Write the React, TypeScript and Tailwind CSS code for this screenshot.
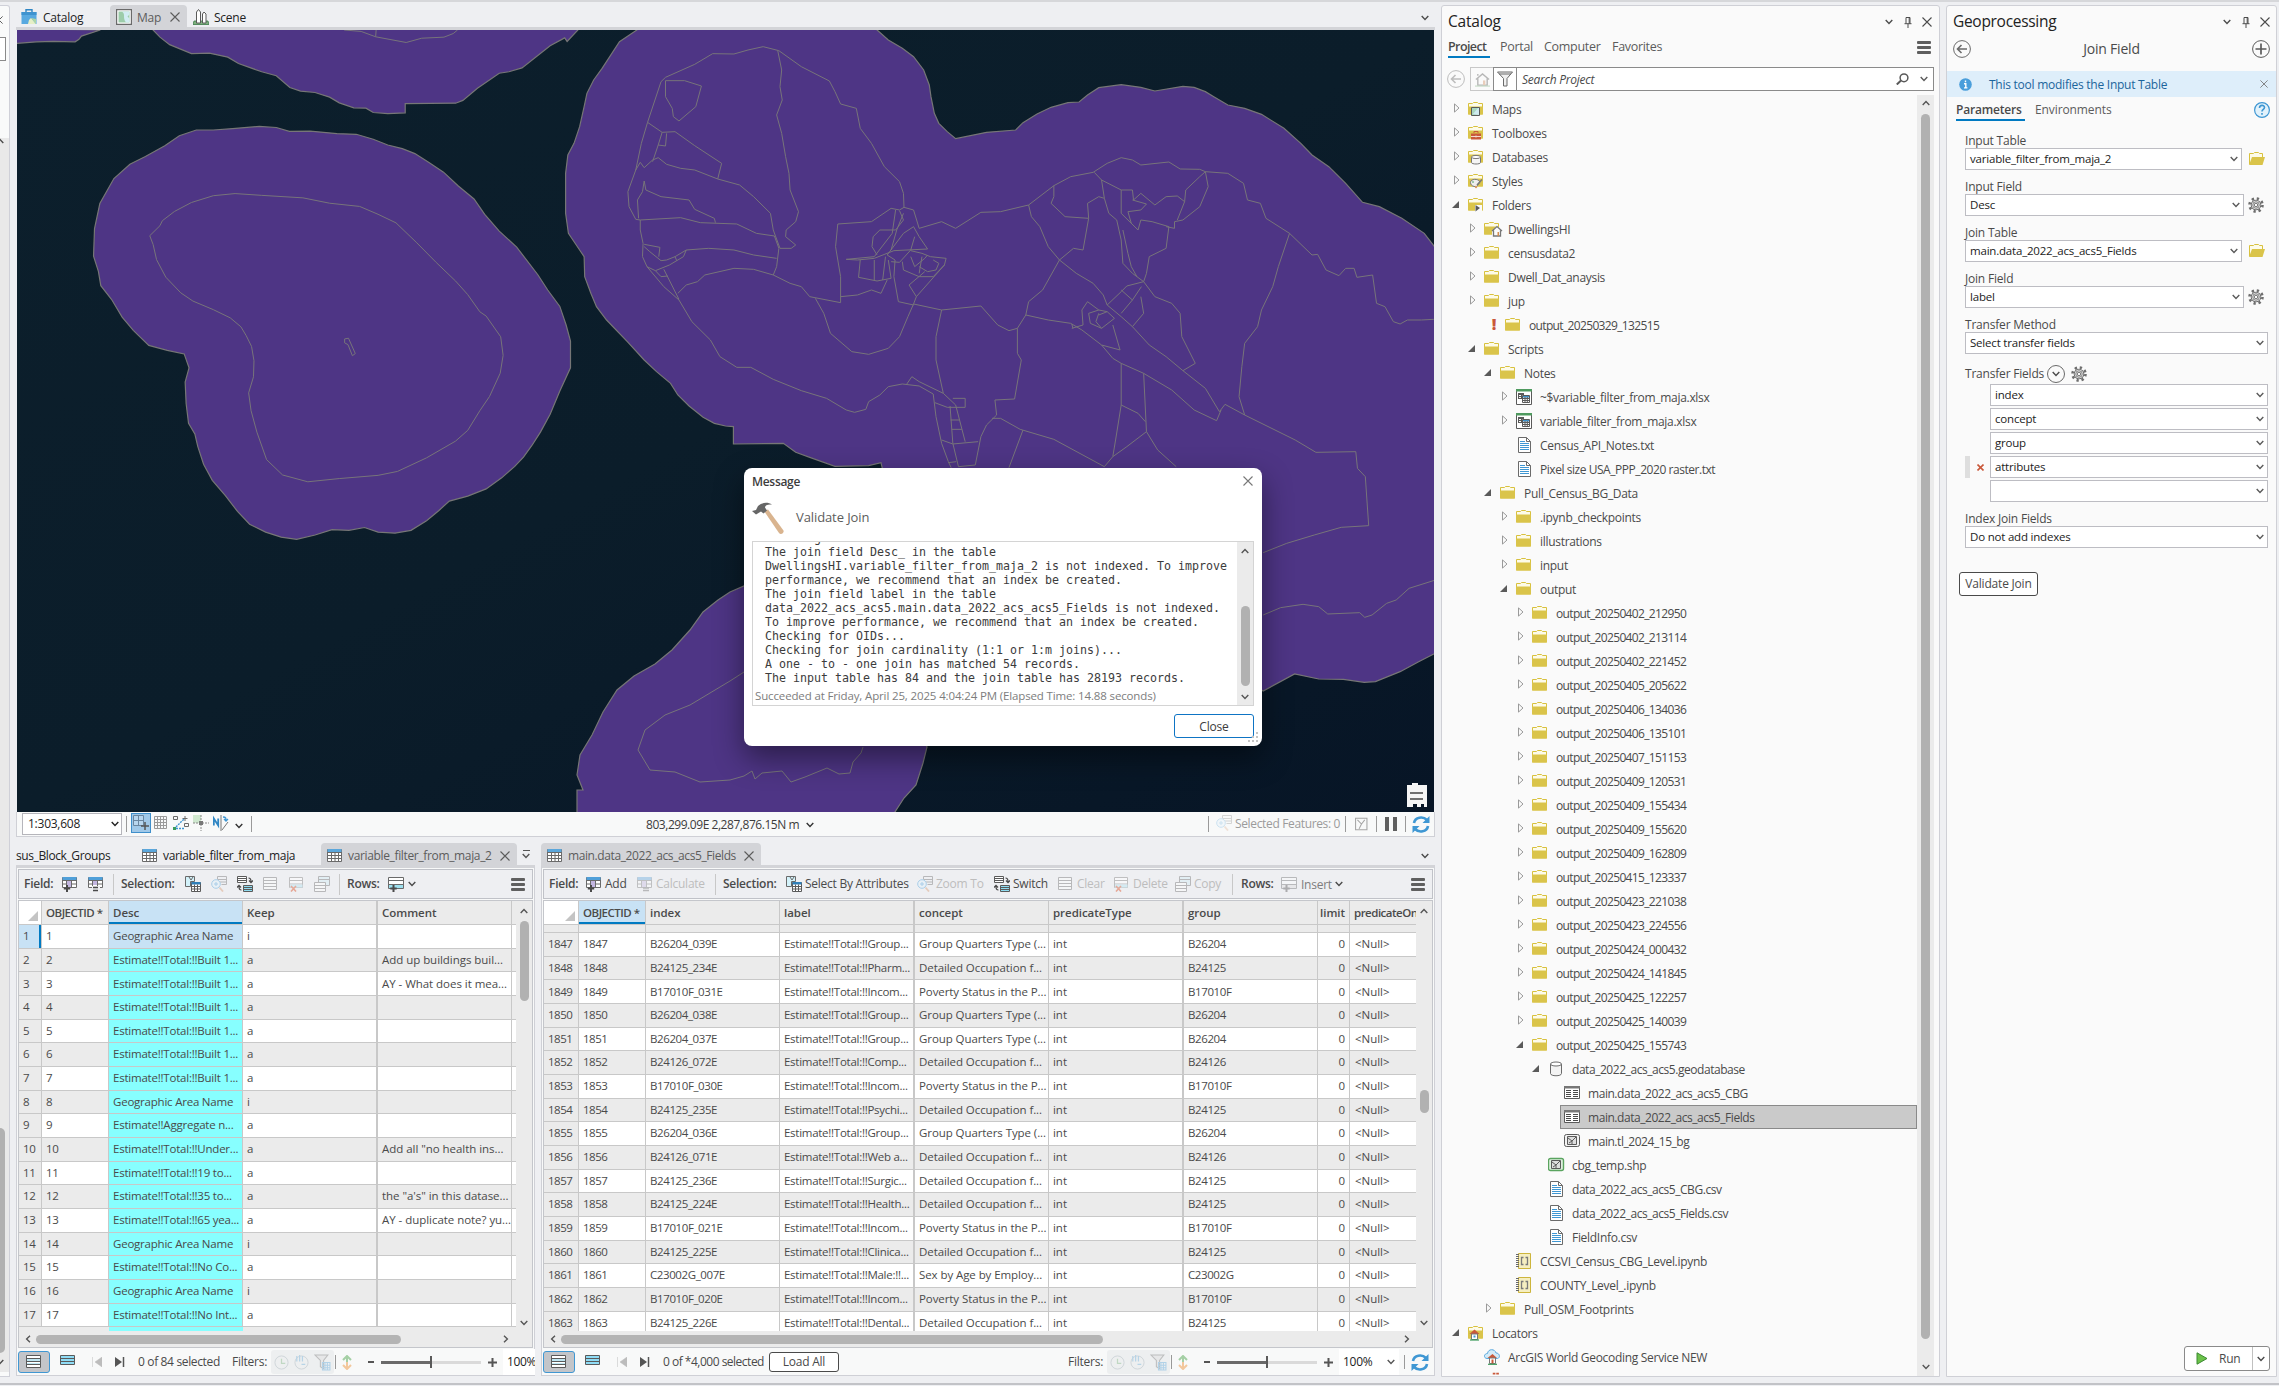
import React from 'react';

/* ---------- small glyphs ---------- */
type P = { className?: string };

const Chev = ({ className = '' }: P) => (
  <svg className={`h-[6px] w-[8px] shrink-0 ${className}`} viewBox="0 0 8 6" fill="none" stroke="currentColor" strokeWidth="1.4"><path d="M.7 1 4 4.4 7.3 1" /></svg>
);
const ChevUp = ({ className = '' }: P) => <Chev className={`rotate-180 ${className}`} />;
const Cross = ({ className = 'h-[10px] w-[10px]' }: P) => (
  <svg className={`shrink-0 ${className}`} viewBox="0 0 10 10" stroke="currentColor" strokeWidth="1.1"><path d="M.5.5l9 9M9.5.5l-9 9" /></svg>
);
const Pin = () => (
  <svg className="h-[11px] w-[8px]" viewBox="0 0 8 11" fill="none" stroke="#4c4c4c" strokeWidth="1"><path d="M2 .5h4v6M2 .5v6M5.2.5v6M.5 6.7h7M4 7v4" /></svg>
);
const Burger = () => (
  <div className="flex h-[13px] w-[14px] shrink-0 flex-col justify-between">
    <div className="h-[3px] rounded-[1px] bg-[#5f5f5f]" /><div className="h-[3px] rounded-[1px] bg-[#5f5f5f]" /><div className="h-[3px] rounded-[1px] bg-[#5f5f5f]" />
  </div>
);
const Ico = ({ children, className = 'h-4 w-4' }: { children: React.ReactNode; className?: string }) => (
  <svg className={`shrink-0 ${className}`} viewBox="0 0 16 16" fill="none" strokeWidth="1">{children}</svg>
);

const TableIcon = () => (
  <Ico><path d="M.5 1.5h14v12H.5z" fill="#fff" stroke="#6a6a6a" /><path d="M.5 1h14v3H.5z" fill="#5ba7dc" /><path d="M.5 4.5h14M.5 7.5h14M.5 10.5h14M4.5 4.5v9M8 4.5v9M11.5 4.5v9" stroke="#6a6a6a" /></Ico>
);
const FieldAdd = ({ dim }: { dim?: boolean }) => (
  <Ico className={dim ? 'h-4 w-4 opacity-35' : 'h-4 w-4'}><path d="M.5 1.5h14v10H.5z" fill="#fff" stroke="#6a6a6a" /><path d="M.5 1h14v3H.5z" fill="#4f9fd9" /><path d="M.5 4.5h14M.5 8h14M4.5 4.5v7M9.5 4.5v7" stroke="#6a6a6a" /><path d="M5 5h4v6H5z" fill="#c3b6e0" />{dim ? <path d="M6 12h6M6 14.5h6" stroke="#555" strokeWidth="1.5" /> : <path d="M5 9v7M1.8 12.5h6.4" stroke="#4a4a4a" strokeWidth="2" />}</Ico>
);
const FieldCalc = () => (
  <Ico><path d="M.5 1.5h14v10H.5z" fill="#fff" stroke="#6a6a6a" /><path d="M.5 1h14v3H.5z" fill="#4f9fd9" /><path d="M.5 4.5h14M.5 8h14M4.5 4.5v7M9.5 4.5v7" stroke="#6a6a6a" /><path d="M5 5h4v4H5z" fill="#c3b6e0" /><path d="M4 10h8v6H4z" fill="#eeeff2" /><path d="M5 11.5h5M5 14.5h5" stroke="#4a4a4a" strokeWidth="1.5" /></Ico>
);
const SelAttr = () => (
  <Ico><path d="M.5.5h9v5h-4v5h-5z" fill="#d3f2fa" stroke="#6a6a6a" /><path d="M4 1l2 3 2-3" stroke="#6a6a6a" /><path d="M6.5 6.5h9v9h-9z" fill="#fff" stroke="#5a5a5a" /><path d="M6.5 6h9v2.5h-9z" fill="#2f7fb8" /><path d="M6.500 10.500h9M6.500 13h9M9.500 8.500v7M12.500 8.500v7" stroke="#5a5a5a" /></Ico>
);
const ZoomTo = () => (
  <Ico className="h-4 w-4 opacity-45"><path d="M6.500.500h9v8h-5M6.500 3.500h9M8.500 6h7M6.500.5v3" stroke="#777" /><circle cx="5" cy="8" r="4.300" fill="#e2f2fb" stroke="#5aa8de" /><path d="M5 6v4M3 8h4" stroke="#5aa8de" /><path d="M8.500 11.500 12 15.500" stroke="#d9a27c" strokeWidth="1.800" /></Ico>
);
const SwitchI = () => (
  <Ico><path d="M.5.5h9v6h-9zM.5 2.500h9M.5 4.500h9" fill="#fff" stroke="#5a5a5a" /><path d="M6.500 9.500h9v6h-9zM6.500 11.500h9M6.500 13.500h9" fill="#8fdcf0" stroke="#5a5a5a" /><path d="M11.500 2c2 0 2.500 1 2.500 3.500M12 4.500l2 2.200 2-2.200M4.500 14c-2 0-2.500-1-2.500-3.500M0 11.500l2-2.200 2 2.200" stroke="#4a4a4a" strokeWidth="1.200" /></Ico>
);
const RowsI = () => <Ico className="h-4 w-4 opacity-45"><path d="M1.500 1.500h13v12h-13zM1.500 4.500h13M1.500 7.500h13M1.500 10.500h13" stroke="#777" fill="#fff" /></Ico>;
const DeleteI = () => (
  <Ico className="h-4 w-4 opacity-55"><path d="M1.500 1.500h13v10h-13zM1.500 4.500h13M1.500 8h13" stroke="#999" fill="#fff" /><path d="M2 8.500h12.500v3H2z" fill="#bfe6f2" /><path d="M3 10l5 5.500M8 10l-5 5.500" stroke="#e0704f" strokeWidth="1.600" /></Ico>
);
const CopyI = () => (
  <Ico className="h-4 w-4 opacity-45"><path d="M4.500.5h11v9h-11zM4.500 3.500h11" stroke="#777" fill="#d5edf5" /><path d="M.5 6.500h11v9H.5zM.5 9.500h11M.5 12.500h11" stroke="#777" fill="#fff" /></Ico>
);
const RowsAdd = ({ dim }: { dim?: boolean }) => (
  <Ico className={dim ? 'h-4 w-4 opacity-40' : 'h-4 w-4'}><path d="M.5 1.500h15v11H.5zM.5 4.500h15M.5 8.500h15" stroke="#6a6a6a" fill="#fff" /><path d="M1 9h14v3H1z" fill={dim ? '#ddd' : '#9fe0ee'} /><path d="M5.500 9v7M2.300 12.500h6.400" stroke="#4a4a4a" strokeWidth="2" /></Ico>
);
const Refresh = () => (
  <svg className="h-[17px] w-[18px] shrink-0" viewBox="0 0 18 17" fill="none" stroke="#3f97d3" strokeWidth="2.600"><path d="M2 7C3 1 11 0 15 4M16 10c-1 6-9 7-13 3" /><path d="M17.500 0v7h-7zM.5 17v-7h7z" fill="#3f97d3" stroke="none" /></svg>
);

const folderBase = <><path d="M.5 13V2.500h4l1-1h4l1 1h4V13z" fill="#fdfbe9" stroke="#d8c13e" /><path d="M0 5.500h15V13.500H0z" fill="#dac44a" /></>;
const icons: Record<string, React.ReactNode> = {
  folder: folderBase,
  maps: <>{folderBase}<path d="M3.500 6.500h8v8h-8z" fill="#a9d7c0" stroke="#5a5a5a" /><path d="M5 13l5-6h1v7z" fill="#cfeaf0" /></>,
  tool: <>{folderBase}<path d="M3 8.500h10v6H3z" fill="#c9583a" /><path d="M6 8V6.500h4V8" stroke="#c9583a" /><path d="M3 11.500h10M8 10.500v2" stroke="#f4d9d0" /></>,
  db: <>{folderBase}<path d="M3.500 8v5.500c0 2 9 2 9 0V8" fill="#f5f5f5" stroke="#777" /><ellipse cx="8" cy="8" rx="4.500" ry="1.600" fill="#fff" stroke="#777" /></>,
  style: <>{folderBase}<path d="M2.500 9.500c0-4 8-4 9-1s-2 2-2 4-7 1.500-7-3z" fill="#eee" stroke="#777" /><path d="M14 6.500 9 12" stroke="#777" strokeWidth="1.500" /><circle cx="5" cy="9" r=".8" fill="#3a9a5a" /><circle cx="8" cy="14" r="1.200" fill="#d89a6a" /></>,
  conn: <>{folderBase}<path d="M7 8h7v7H7z" fill="#fafafa" /><path d="M7.500 8v6.500L12 11z" fill="#5a5a5a" /></>,
  home: <>{folderBase}<path d="M8 9.500 13 5l5 4.500V15H8z" fill="#fafafa" /><path d="M9.500 9.500V15h7V9.500M8 10l5-4.500L18 10" stroke="#777" strokeWidth="1.300" /><path d="M13.500 11h1.500v4h-1.500z" fill="#d38b4f" /></>,
  xls: <><path d="M.5.5h15v15H.5z" fill="#fff" stroke="#5a5a5a" /><path d="M0 0h16v2.500H0z" fill="#4f9a5f" /><path d="M2 4h6v6H2z" fill="#5a5a5a" /><path d="M3 6h2v1H3zM3 8h2v1H3zM6 6h2v1H6z" fill="#fff" /><path d="M6.500 6.500h7v7h-7z" fill="#fff" stroke="#5a5a5a" /><path d="M7 7h6v1.500H7z" fill="#3b8fc9" /><path d="M6.500 9.500h7M6.500 11.500h7M9 8v5M11.300 8v5" stroke="#5a5a5a" /></>,
  txt: <><path d="M2.500.5h8l4 4v11h-12z" fill="#fff" stroke="#6a6a6a" /><path d="M10.500.5v4h4" stroke="#6a6a6a" /><path d="M4 4.500h5M4 6.500h9M4 8.500h9M4 10.500h9M4 12.500h9" stroke="#3f97d3" /></>,
  gdb: <><path d="M2.500 3v9.500c0 3 11 3 11 0V3" fill="#f3f3f3" stroke="#6a6a6a" /><ellipse cx="8" cy="3" rx="5.500" ry="2" fill="#fff" stroke="#6a6a6a" /></>,
  tbl: <><path d="M.5 1.500h15v12H.5z" fill="#fff" stroke="#5a5a5a" /><path d="M0 1h16v2.500H0z" fill="#777" /><path d="M2 5.500h5M2 7.500h5M2 9.500h5M2 11.500h5M9 5.500h5M9 7.500h5M9 9.500h5M9 11.500h5" stroke="#4a4a4a" /></>,
  poly: <><rect x=".5" y="1.500" width="15" height="12" rx="2" fill="#f2f2f2" stroke="#5a5a5a" /><path d="M3.500 3.500h9v8h-9z" fill="#ddd" stroke="#5a5a5a" /><path d="M4 5l4 3 4-4M8 8v3M5 10l3-2" stroke="#5a5a5a" /></>,
  shp: <><rect x=".5" y="1.500" width="15" height="12" rx="2" fill="#dff0df" stroke="#5aa45f" strokeWidth="1.400" /><path d="M3.500 3.500h9v8h-9z" fill="#ddd" stroke="#5a5a5a" /><path d="M4 5l4 3 4-4M8 8v3M5 10l3-2" stroke="#5a5a5a" /></>,
  nb: <><path d="M2.500.5h12v15h-12z" fill="#f5eec0" stroke="#cdb53c" /><path d="M0 1.500h3M0 3.500h3M0 5.500h3M0 7.500h3M0 9.500h3M0 11.500h3M0 13.500h3" stroke="#6a6a6a" /><path d="M7.500 4.500h-2v7h2M9.500 4.500h2v7h-2" stroke="#7a7a7a" strokeWidth="1.300" /></>,
  loc: <>{folderBase}<path d="M1.500 9 6.500 4.500l5 4.500z" fill="#c9583a" /><path d="M3.500 9h6v5.500h-6z" fill="#fff" stroke="#777" /><path d="M5.500 10.500h2v2h-2z" fill="#3f97d3" /><path d="M2 15h9" stroke="#3a9a5a" strokeWidth="1.200" /></>,
  cloud: <><path d="M3 9.500C-1 9 0 4.500 3.500 4.500 4-.5 11-.5 12 4c4 0 4.500 5 1.500 5.500z" fill="#d3ebf8" stroke="#5aa8de" /><path d="M3.500 9 8.500 5l4.500 4z" fill="#c9583a" /><path d="M5.500 9h6v5.500h-6z" fill="#fff" stroke="#777" /><path d="M7.500 10.500h2v4h-2z" fill="#c9583a" /><path d="M4 15.300h9" stroke="#3a9a5a" strokeWidth="1.200" /></>,
};

/* ---------- catalog tree ---------- */
type Node = [number, string, string, string];
const outs = ['20250402_212950', '20250402_213114', '20250402_221452', '20250405_205622', '20250406_134036', '20250406_135101', '20250407_151153', '20250409_120531', '20250409_155434', '20250409_155620', '20250409_162809', '20250415_123337', '20250423_221038', '20250423_224556', '20250424_000432', '20250424_141845', '20250425_122257', '20250425_140039'];
const tree: Node[] = [
  [0, 'c', 'maps', 'Maps'], [0, 'c', 'tool', 'Toolboxes'], [0, 'c', 'db', 'Databases'], [0, 'c', 'style', 'Styles'], [0, 'o', 'conn', 'Folders'],
  [1, 'c', 'home', 'DwellingsHI'], [1, 'c', 'folder', 'censusdata2'], [1, 'c', 'folder', 'Dwell_Dat_anaysis'], [1, 'c', 'folder', 'jup'],
  [2, '!', 'folder', 'output_20250329_132515'], [1, 'o', 'folder', 'Scripts'], [2, 'o', 'folder', 'Notes'],
  [3, 'c', 'xls', '~$variable_filter_from_maja.xlsx'], [3, 'c', 'xls', 'variable_filter_from_maja.xlsx'], [3, '', 'txt', 'Census_API_Notes.txt'], [3, '', 'txt', 'Pixel size USA_PPP_2020 raster.txt'],
  [2, 'o', 'folder', 'Pull_Census_BG_Data'], [3, 'c', 'folder', '.ipynb_checkpoints'], [3, 'c', 'folder', 'illustrations'], [3, 'c', 'folder', 'input'], [3, 'o', 'folder', 'output'],
  ...outs.map((o): Node => [4, 'c', 'folder', 'output_' + o]),
  [4, 'o', 'folder', 'output_20250425_155743'], [5, 'o', 'gdb', 'data_2022_acs_acs5.geodatabase'], [6, '', 'tbl', 'main.data_2022_acs_acs5_CBG'], [6, 's', 'tbl', 'main.data_2022_acs_acs5_Fields'],
  [6, '', 'poly', 'main.tl_2024_15_bg'], [5, '', 'shp', 'cbg_temp.shp'], [5, '', 'txt', 'data_2022_acs_acs5_CBG.csv'], [5, '', 'txt', 'data_2022_acs_acs5_Fields.csv'], [5, '', 'txt', 'FieldInfo.csv'],
  [3, '', 'nb', 'CCSVI_Census_CBG_Level.ipynb'], [3, '', 'nb', 'COUNTY_Level_.ipynb'], [2, 'c', 'folder', 'Pull_OSM_Footprints'], [0, 'o', 'loc', 'Locators'], [1, '', 'cloud', 'ArcGIS World Geocoding Service NEW'],
];

function TreeRow({ n }: { n: Node }) {
  const [lvl, st, ic, label] = n;
  const sel = st === 's';
  const pad = lvl * 16 + (st === '!' ? 5 : 0);
  const track = label.startsWith('output_') ? 'tracking-[-0.65px]' : label.includes('_20') ? 'tracking-[-0.45px]' : 'tracking-[-0.3px]';
  return (
    <div className="flex h-6 shrink-0" style={{ paddingLeft: pad }}>
      <div className={st === '!' ? 'flex w-[14px] items-center' : sel ? 'w-[10px]' : 'flex w-[14px] items-center'}>
        {st === 'c' && <svg className="-mt-[2px] h-[10px] w-[6px]" viewBox="0 0 6 10"><path d="M.5.900v8.200L5 5z" fill="none" stroke="#9a9a9a" /></svg>}
        {st === 'o' && <svg className="-mt-[2px] -ml-[2px] h-[7px] w-[7px]" viewBox="0 0 7 7"><path d="M7 0v7H0z" fill="#5a5a5a" /></svg>}
        {st === '!' && <span className="-mt-[2px] w-[6px] text-center text-[16px] leading-6 font-extrabold text-[#c9583a]">!</span>}
      </div>
      <div className={sel ? 'flex flex-1 items-center border border-[#8a8a8a] bg-[#cacaca] pl-[3px]' : 'flex flex-1 items-center'}>
        <svg className="h-4 w-[19px] shrink-0" viewBox="0 0 19 16" fill="none">{icons[ic]}</svg>
        <span className={`ml-[5px] pt-px whitespace-nowrap ${track}`}>{label}</span>
      </div>
    </div>
  );
}

/* ---------- attribute tables ---------- */
const leftRows: [string, string, string][] = [
  ['Geographic Area Name', 'i', ''], ['Estimate!!Total:!!Built 1...', 'a', 'Add up buildings buil...'], ['Estimate!!Total:!!Built 1...', 'a', 'AY - What does it mea...'], ['Estimate!!Total:!!Built 1...', 'a', ''], ['Estimate!!Total:!!Built 1...', 'a', ''], ['Estimate!!Total:!!Built 1...', 'a', ''], ['Estimate!!Total:!!Built 1...', 'a', ''], ['Geographic Area Name', 'i', ''], ['Estimate!!Aggregate n...', 'a', ''], ['Estimate!!Total:!!Under...', 'a', 'Add all "no health ins...'], ['Estimate!!Total:!!19 to...', 'a', ''], ['Estimate!!Total:!!35 to...', 'a', 'the "a\'s" in this datase...'], ['Estimate!!Total:!!65 yea...', 'a', 'AY - duplicate note? yu...'], ['Geographic Area Name', 'i', ''], ['Estimate!!Total:!!No Co...', 'a', ''], ['Geographic Area Name', 'i', ''], ['Estimate!!Total:!!No Int...', 'a', ''],
];
const G = 'Group Quarters Type (...', D = 'Detailed Occupation f...', V = 'Poverty Status in the P...';
const rightRows: [string, string, string][] = [
  ['B26204_039E', 'Group...', G], ['B24125_234E', 'Pharm...', D], ['B17010F_031E', 'Incom...', V], ['B26204_038E', 'Group...', G], ['B26204_037E', 'Group...', G], ['B24126_072E', 'Comp...', D], ['B17010F_030E', 'Incom...', V], ['B24125_235E', 'Psychi...', D], ['B26204_036E', 'Group...', G], ['B24126_071E', 'Web a...', D], ['B24125_236E', 'Surgic...', D], ['B24125_224E', 'Health...', D], ['B17010F_021E', 'Incom...', V], ['B24125_225E', 'Clinica...', D], ['C23002G_007E', 'Male:!!...', 'Sex by Age by Employ...'], ['B17010F_020E', 'Incom...', V], ['B24125_226E', 'Dental...', D],
];

const cell = 'flex shrink-0 items-center overflow-hidden border-r border-b border-[#c8c8c8] whitespace-nowrap';
const body = `${cell} pb-px`;

function Corner({ className = '' }: P) {
  return <div className={`${cell} items-end justify-end bg-white pr-[3px] pb-[3px] ${className}`}><svg className="h-[10px] w-[10px]" viewBox="0 0 10 10"><path d="M10 0v10H0z" fill="#c4c4c4" /></svg></div>;
}

function LeftGrid() {
  return (
    <div className="ml-[2px] flex h-[448px] w-[515px] flex-col border border-[#c4c6cb] bg-[#ebebeb] text-[11.5px] tracking-[-0.04px]">
      <div className="flex h-[430px]">
        <div className="h-[430px] w-[497px] overflow-hidden">
          <div className="flex h-[24px] font-semibold">
            <Corner className="w-[23px]" />
            <div className={`${cell} w-[67px] pl-1 tracking-[-0.5px]`}>OBJECTID *</div>
            <div className={`${cell} w-[134px] bg-[#c8e2f5] pl-1 shadow-[inset_0_-2px_0_#007ac2]`}>Desc</div>
            <div className={`${cell} w-[135px] border-r-2 pl-1`}>Keep</div>
            <div className={`${cell} w-[134px] pl-1`}>Comment</div>
            <div className={`${cell} w-[4px] border-r-0`} />
          </div>
          {leftRows.map(([d, k, c], i) => {
            const bg = i % 2 ? 'bg-[#ebebeb]' : 'bg-white';
            return (
              <div key={i} className="flex h-[23.667px]">
                <div className={`${body} w-[23px] pl-1 tracking-[-0.4px] ${i ? 'bg-[#ebebeb]' : 'bg-[#c8e2f5] shadow-[inset_-2px_0_0_#007ac2]'}`}>{i + 1}</div>
                <div className={`${body} w-[67px] pl-1 tracking-[-0.4px] ${bg}`}>{i + 1}</div>
                <div className={`${body} w-[134px] pl-1 tracking-[-0.22px] ${i ? 'bg-[#87ffff]' : 'bg-[#c8e2f5]'}`}>{d}</div>
                <div className={`${body} w-[135px] border-r-2 pl-1 ${bg}`}>{k}</div>
                <div className={`${body} w-[134px] pl-1 ${bg}`}>{c}</div>
                <div className={`${body} w-[4px] border-r-0 ${bg}`} />
              </div>
            );
          })}
          <div className="flex h-[5px]"><div className="ml-[90px] h-[5px] w-[134px] bg-[#87ffff]" /></div>
        </div>
        <div className="flex w-[16px] flex-col items-center pt-[7px]">
          <ChevUp className="text-[#555]" />
          <div className="mt-[7px] h-[80px] w-[9px] rounded-full bg-[#b1b1b1]" />
          <div className="flex-1" />
          <Chev className="mb-[5px] text-[#555]" />
        </div>
      </div>
      <div className="flex h-[17px] items-center">
        <Chev className="ml-[5px] rotate-90 text-[#555]" />
        <div className="ml-[4px] h-[9px] w-[365px] rounded-full bg-[#b4b4b4]" />
        <div className="flex-1" />
        <Chev className="mr-[22px] -rotate-90 text-[#555]" />
      </div>
    </div>
  );
}

function RightGrid() {
  return (
    <div className="ml-[2px] flex h-[448px] w-[890px] flex-col border border-[#c4c6cb] bg-[#ebebeb] text-[11.5px] tracking-[-0.04px]">
      <div className="flex h-[430px]">
        <div className="h-[430px] w-[872px] overflow-hidden">
          <div className="flex h-[24px] font-semibold">
            <Corner className="w-[35px]" />
            <div className={`${cell} w-[67px] bg-[#c8e2f5] pl-1 tracking-[-0.5px] shadow-[inset_0_-2px_0_#007ac2]`}>OBJECTID *</div>
            <div className={`${cell} w-[134px] pl-1`}>index</div>
            <div className={`${cell} w-[135px] border-r-2 pl-1`}>label</div>
            <div className={`${cell} w-[134px] pl-1`}>concept</div>
            <div className={`${cell} w-[135px] border-r-2 pl-1`}>predicateType</div>
            <div className={`${cell} w-[134px] pl-1`}>group</div>
            <div className={`${cell} w-[32px] justify-end pr-1`}>limit</div>
            <div className={`${cell} w-[66px] border-r-0 pl-1 tracking-[-0.5px]`}>predicateOn</div>
          </div>
          <div className="flex h-[8px]">
            <div className={`${cell} w-[35px]`} /><div className={`${cell} w-[67px]`} />
            <div className={`${cell} w-[134px]`} /><div className={`${cell} w-[135px] border-r-2`} />
            <div className={`${cell} w-[134px]`} /><div className={`${cell} w-[135px] border-r-2`} />
            <div className={`${cell} w-[134px]`} /><div className={`${cell} w-[32px]`} /><div className={`${cell} w-[66px] border-r-0`} />
          </div>
          {rightRows.map(([ix, l, c], i) => {
            const bg = i % 2 ? 'bg-[#ebebeb]' : 'bg-white';
            return (
              <div key={i} className="flex h-[23.667px]">
                <div className={`${body} w-[35px] bg-[#ebebeb] pl-1 tracking-[-0.5px]`}>{1847 + i}</div>
                <div className={`${body} w-[67px] pl-1 tracking-[-0.5px] ${bg}`}>{1847 + i}</div>
                <div className={`${body} w-[134px] pl-1 tracking-[-0.4px] ${bg}`}>{ix}</div>
                <div className={`${body} w-[135px] border-r-2 pl-1 tracking-[-0.27px] ${bg}`}>{'Estimate!!Total:!!' + l}</div>
                <div className={`${body} w-[134px] pl-1 tracking-[-0.08px] ${bg}`}>{c}</div>
                <div className={`${body} w-[135px] border-r-2 pl-1 ${bg}`}>int</div>
                <div className={`${body} w-[134px] pl-1 tracking-[-0.4px] ${bg}`}>{ix.split('_')[0]}</div>
                <div className={`${body} w-[32px] justify-end pr-1 ${bg}`}>0</div>
                <div className={`${body} w-[66px] border-r-0 pl-[5px] ${bg}`}>&lt;Null&gt;</div>
              </div>
            );
          })}
        </div>
        <div className="flex w-[16px] flex-col items-center pt-[7px]">
          <ChevUp className="text-[#555]" />
          <div className="mt-[176px] h-[23px] w-[9px] rounded-full bg-[#b1b1b1]" />
          <div className="flex-1" />
          <Chev className="mb-[5px] text-[#555]" />
        </div>
      </div>
      <div className="flex h-[17px] items-center">
        <Chev className="ml-[5px] rotate-90 text-[#555]" />
        <div className="ml-[4px] h-[9px] w-[542px] rounded-full bg-[#b4b4b4]" />
        <div className="flex-1" />
        <Chev className="mr-[21px] -rotate-90 text-[#555]" />
      </div>
    </div>
  );
}

/* ---------- table footers ---------- */
const ViewButtons = () => (
  <>
    <div className="ml-[2px] flex h-[22px] w-[32px] items-center justify-center rounded-[3px] border-[1.5px] border-[#3f97d3] bg-[#c3c5c9]">
      <Ico><path d="M.5 1.500h14v12H.5z" fill="#fff" stroke="#5a5a5a" /><path d="M1 5h13v2H1zM1 9h13v2H1z" fill="#bfe6f2" /><path d="M.5 4.500h14M.5 7.500h14M.5 10.500h14" stroke="#5a5a5a" /></Ico>
    </div>
    <div className="ml-[10px] w-4 pb-1"><Ico><path d="M.5 3.500h14v9H.5zM.5 6.500h14M.5 9.500h14" fill="#8fdcf5" stroke="#5a5a5a" /></Ico></div>
    <svg className="ml-[16px] h-[10px] w-[10px]" viewBox="0 0 10 10"><path d="M.5 0v10M10 0v10L3 5z" fill="#bcbcbc" stroke="#bcbcbc" strokeWidth=".5" /></svg>
    <svg className="ml-[13px] h-[10px] w-[10px]" viewBox="0 0 10 10"><path d="M0 0v10l7-5z" fill="#555" /><path d="M8.500 0v10" stroke="#555" strokeWidth="1.500" /></svg>
  </>
);
const FilterTools = () => (
  <>
    <div className="flex h-[24px] w-[63px] items-center justify-between rounded-[3px] bg-[#edeff0] px-[3px]">
      <Ico className="h-[15px] w-[15px] opacity-30"><circle cx="8" cy="8" r="7" stroke="#8a9aa5" /><path d="M8 4v5h4" stroke="#5aa45f" strokeWidth="1.300" /></Ico>
      <Ico className="h-[15px] w-[15px] opacity-30"><circle cx="8" cy="8" r="7" stroke="#8a9aa5" /><path d="M3 1v6M6 0v7M9 1v6M8 10h4" stroke="#3f97d3" strokeWidth="1.300" /></Ico>
      <Ico className="h-[17px] w-[17px] opacity-40"><path d="M1 1h12L9 6v8l-3-2V6z" stroke="#777" fill="#ddd" /><path d="M8 8h7v7H8zM8 10.500h7M8 13h7M10.300 8v7M12.600 8v7" stroke="#5aa8de" /></Ico>
    </div>
    <div className="ml-px h-[14px] w-px bg-[#999]" />
    <svg className="ml-[6px] h-[15px] w-[10px]" viewBox="0 0 10 15" fill="none" strokeWidth="2"><path d="M5 8V1.500M1 5l4-4 4 4" stroke="#a5d0a5" /><path d="M5 7v6.500M1 10l4 4 4-4" stroke="#f3c79c" /></svg>
    <div className="ml-[16px] h-[2px] w-[6px] bg-[#555]" />
    <div className="ml-[7px] flex h-[12px] w-[100px] items-center">
      <div className="h-[3px] w-[49px] bg-[#6a6a6a]" /><div className="h-[12px] w-[2px] bg-[#5a5a5a]" /><div className="h-[3px] flex-1 bg-[#dadada]" />
    </div>
    <svg className="ml-[7px] h-[9px] w-[9px]" viewBox="0 0 9 9"><path d="M4.500 0v9M0 4.500h9" stroke="#555" strokeWidth="2" /></svg>
  </>
);

/* ---------- map ---------- */
const line = { fill: 'none', stroke: '#77747a', strokeWidth: 1, vectorEffect: 'non-scaling-stroke' as const };
const land = { fill: '#4e3585', stroke: '#767676', strokeWidth: 1.2, vectorEffect: 'non-scaling-stroke' as const };

function MapView() {
  return (
    <svg className="block h-[782px] w-[1417px]" viewBox="17 30 1417 782">
      <defs>
        <linearGradient id="sea" x1="0" y1="0" x2="1" y2="1"><stop offset="0" stopColor="#0c1f2c" /><stop offset=".5" stopColor="#0b1d2a" /><stop offset="1" stopColor="#071526" /></linearGradient>
      </defs>
      <path d="M17 30h1417v782H17z" fill="url(#sea)" />
      <g transform="scale(.4847 .35714)">
        <path {...land} d="M30,80 L207,84 168,101 163,110 155,117 110,116 75,117 30,122Z" />
        <path {...land} d="M313,80 L330,104 350,125 395,150 432,149 470,160 492,178 540,201 570,212 598,245 620,255 650,259 680,272 700,288 730,302 755,303 770,315 800,318 836,316 836,290 940,289 955,281 985,247 1030,205 1050,201 1077,190 1135,128 1165,106 1170,116 1195,80Z" />
        <path {...line} d="M710,84 L745,88 775,103 838,119 870,107 916,104 935,94 944,84M775,103 L776,84" />
        <path {...land} d="M405,364 L440,364 480,360 535,354 570,357 597,368 640,367 695,374 735,376 770,390 800,406 830,416 856,430 885,455 915,482 945,520 978,557 1000,600 1030,647 1066,692 1110,770 1130,812 1155,858 1168,910 1177,955 1177,1030 1155,1095 1135,1160 1115,1210 1097,1248 1080,1280 1062,1306 1035,1338 1003,1369 965,1389 927,1403 905,1430 880,1458 848,1485 815,1493 780,1490 752,1477 720,1485 685,1483 650,1498 612,1510 580,1504 548,1490 515,1468 490,1432 465,1388 438,1345 420,1300 408,1250 402,1215 389,1185 384,1130 382,1070 390,1030 380,991 345,981 307,967 275,925 252,888 230,838 208,800 203,760 193,717 195,640 206,570 235,500 268,460 300,438 340,408 370,380Z" />
        <path {...line} d="M440,548 L485,542 540,547 625,554 680,569 742,578 780,600 817,624 860,680 900,735 940,787 965,825 990,873 1003,885 1033,943 1038,995 1032,1045 1010,1110 990,1150 965,1205 940,1235 880,1282 820,1320 780,1331 700,1340 635,1349 583,1330 550,1287 530,1210 518,1150 513,1100 523,1055 524,1010 519,970 508,940 497,915 475,890 440,867 398,843 373,820 342,776 323,727 316,685 309,660 330,632 335,618 360,592 395,567ZM711,949 L719,947 733,990 727,996 718,965 711,960Z" />
      </g>
      <path {...land} d="M577,815 L577,790 583,790 577,775 580,755 592,735 603,712 617,690 634,676 655,664 672,650 690,630 703,612 718,600 730,592 744,586 900,650 927,747 923,763 916,785 904,798 893,815Z" />
      <path {...line} d="M730,681 L744,672M730,681 L715,690 690,705 665,715 645,730 638,750 650,770 675,772 700,782 730,780 744,776 752,771 755,779 762,773 782,771 791,782 805,777 827,768 839,774 850,773 853,762 861,753 863,747" />
      <g transform="translate(560 0) scale(.5612 .33333)">
        <path {...land} d="M137,80 L137,90 106,125 75,205 60,240 48,280 43,320 35,380 25,430 14,465 10,520 10,640 15,700 35,750 43,770 44,830 55,880 65,920 83,960 120,1025 150,1080 172,1115 197,1150 210,1185 230,1218 255,1252 275,1270 295,1278 309,1280 309,1332 398,1330 420,1357 450,1375 490,1399 550,1397 572,1388 575,1410 700,1500 1100,1900 1253,2073 1309,2022 1352,2037 1396,2038 1433,2047 1453,2045 1497,2015 1530,1985 1565,1955 1565,755 1540,700 1500,655 1460,620 1430,607 1400,550 1370,500 1340,465 1320,430 1290,385 1250,343 1220,325 1190,315 1165,290 1150,275 1130,262 1110,259 1060,273 1035,262 1000,254 960,263 940,285 925,306 905,308 875,322 850,342 825,368 812,390 760,397 705,416 690,395 675,370 667,340 661,290 658,255 648,210 630,170 610,145 585,120 565,90 565,80Z" />
        <path {...line} d="M390,152 L362,140 335,150 310,162 272,161 240,193 188,232 180,245 156,367 145,430 135,510 121,575 123,620 135,658 143,660 143,690 148,730 147,770 155,800 185,860 212,900 235,965 268,1020 285,1070 315,1102 340,1102 380,1138 430,1172 475,1195 510,1230 525,1237 545,1228 550,1205 570,1185 585,1160 610,1152 640,1158 665,1182 670,1250 680,1330 692,1385 697,1403" />
        <path {...line} d="M390,152 L430,200 480,243 490,275 500,312 528,325 535,385 555,430 578,500 605,545 612,580 613,622 630,630 640,685 680,665 705,685 750,637 785,635 835,615 880,557 910,530 950,517 975,490 1000,473 1020,480 1035,495 1085,486 1105,507 1140,508 1150,515 1190,520 1218,550 1225,600 1248,610 1258,655 1300,700 1340,765 1350,763 1365,810 1388,827 1400,805 1415,805 1420,832 1448,825 1455,910 1470,920 1485,965 1497,972 1510,960 1535,960 1557,958" />
        <path {...line} d="M388,152 L395,210 392,260 396,300 386,345 395,400 402,470 408,520 410,570 425,635 420,665 403,690 402,710 420,735 412,745 392,745 380,690 375,640 345,590 320,555 281,537 240,510 215,505 190,493 175,473 165,480 150,503 143,487 135,510M281,537 L288,490 240,437 205,395 182,397 156,367M182,397 L175,435 188,438 190,400M175,435 L165,485M188,242 L222,242 252,258 242,320 212,363 202,350 200,325 188,290ZM150,543 L147,575 138,600 140,655M150,543 L153,570 180,590 230,600 240,628 275,655 277,668M143,660 L215,653 250,668 315,672 350,700 382,708 390,745 386,800 380,825" />
        <path {...line} d="M386,775 L345,765 310,750 265,745 225,750 205,770 190,780 180,782 160,755 150,740M150,733 L178,742 176,770M225,750 L220,770 195,795 170,812 155,800M205,770 L208,782M170,812 L180,830 192,828M185,808 L212,898M210,880 L225,855 245,845 258,825 310,805 345,808 380,825 410,850 430,860 445,890 500,908 500,830 491,740 495,672 555,665 590,625 605,630 613,622M455,895 L470,940 482,1000 520,1055 550,1063 585,1045 605,1010 620,950 630,912M630,915 L603,905 595,830 597,780 583,765M500,890 L530,885 555,870 572,880 583,840" />
        <path {...line} d="M510,778 L560,770 592,700 598,630M605,632 L612,660 598,690 570,690 558,710 556,740 565,765M630,680 L640,710 655,747 595,752 560,775 530,780 510,778M535,780 L532,832 565,843 590,835 585,780M560,840 L560,780M575,840 L580,770M583,765 L612,700 630,680M590,785 L605,787 625,750 632,710M612,640 L600,690 590,750M610,785 L612,810 640,830 665,830 685,795 688,775 660,770 645,760 625,752M625,770 L632,800 650,775 655,765M640,800 L655,815 670,810 675,790 665,780M645,770 L640,820M685,795 L635,890 622,855 650,815M635,890 L630,912" />
        <path {...line} d="M630,912 L680,930 750,918 780,975 800,992 815,985 830,945 835,905 860,870 890,780 870,740 855,680 840,650 835,615M890,780 L920,820 950,850 968,885 975,915 1000,950 1020,980 1050,1035 1080,1070 1110,1112 1150,1165 1175,1235 1185,1213 1220,1245 1310,1320 1347,1357 1418,1355 1421,1405 1435,1430 1441,1577 1392,1582 1344,1605 1295,1630 1253,1658M830,945 L870,960 910,970 930,990 965,1035 998,1050 985,975M912,972 L914,985M965,1035 L985,1075 1000,1090 1040,1120 1090,1170 1130,1230 1170,1262 1178,1230" />
        <path {...line} d="M1000,1090 L1000,1215 990,1320 985,1370M1040,1120 L1045,1295 1065,1350 1098,1400M1000,1215 L1030,1240 1043,1265M1045,1295 L1010,1340 985,1370 970,1400 880,1318 820,1288 785,1255 770,1255M815,985 L815,1060 822,1080 810,1197 775,1200 778,1245 760,1275 750,1310 740,1395 710,1400M680,930 L670,1010 670,1080 683,1180M700,1195 L722,1195 722,1222 690,1222 668,1208M627,1130 L640,1145 683,1180 705,1215 722,1325M627,1130 L618,1152M695,1218 L700,1330 710,1400M680,1320 L700,1332 745,1325M696,1260 L712,1260M698,1288 L716,1288M692,1388 L706,1385M825,1290 L800,1403" />
        <path {...line} d="M1300,700 L1280,800 1270,860 1250,930 1243,980 1220,1030 1215,1100 1210,1190 1220,1245M880,557 L880,590 875,610 900,650 942,655 940,610 960,590 970,595 965,540 952,517M965,540 L1000,570 1000,640 1030,690 1035,660 1055,665 1085,680 1080,745 1050,770 1045,820 1040,845M970,595 L978,640 992,660 1000,720 1003,790 1020,820 1040,845M1003,690 L1012,760 1018,800 1028,830M942,655 L932,750 915,745 890,780M1000,570 L1020,570 1022,600 1035,580 1060,615 1080,590 1100,588 1113,605 1115,570 1140,530 1150,515 1155,560 1140,620 1110,660 1095,665 1095,685 1080,680M1113,605 L1100,660M1020,600 L1045,612 1035,630 1012,635 1018,670" />
        <path {...line} d="M1040,845 L1060,890 1090,910 1105,940 1108,1010 1132,1090 1110,1112M1040,845 L1010,858 1000,875 975,915M1000,870 L1020,900 1036,860M1020,900 L1000,940M1035,890 L1040,940 1020,980M940,905 L930,930 932,975 912,985M940,905 L960,930 975,935 988,955 965,985 945,970 942,940 960,930M960,940 L955,965 965,985M975,935 L960,945M1253,1845 L1284,1823 1324,1813 1352,1820 1368,1842 1425,1838 1434,1852 1447,1845 1473,1810 1490,1800 1513,1765 1560,1740" />
      </g>
      <path d="M1407 785h5v-2h6v2h9v22h-3v-3h-3v3h-4v-3h-4v3h-6z" fill="#f5f5f5" /><path d="M1410 793h13M1410 799h13" stroke="#444" strokeWidth="1.300" />
    </svg>
  );
}

/* ---------- message dialog ---------- */
function Dialog() {
  return (
    <div className="absolute top-[468px] left-[744px] flex h-[278px] w-[518px] flex-col rounded-[8px] bg-white px-[8px] shadow-[0_12px_30px_rgba(0,0,0,0.45)]">
      <div className="flex h-[26px] items-center justify-between pt-px"><span className="text-[12px] font-semibold tracking-[-0.3px] text-[#3c3c3c]">Message</span><Cross className="mr-px mb-[2px] h-[10px] w-[10px] text-[#777]" /></div>
      <div className="flex h-[47px] items-center">
        <svg className="h-[32px] w-[32px]" viewBox="0 0 32 32"><path d="M12 9l4-1.500 15.500 21c.8 3-3 4.500-4.500 2.500z" fill="#d9b48f" /><path d="M0 9l4-1 2-4c4-4 10-4 14-1.500-4-.5-7 .5-7 3l2 3-3.500 3L9 9.500l-5 3z" fill="#666" /></svg>
        <span className="ml-[12px] text-[13px] tracking-[-0.1px] text-[#5c5c5c]">Validate Join</span>
      </div>
      <div className="flex h-[165px] w-[502px] border border-[#d4d4d4]">
        <div className="flex w-[484px] flex-col overflow-hidden">
          <pre className="mt-[-11px] ml-[12px] font-['DejaVu_Sans_Mono','Liberation_Mono',monospace] text-[11.63px] leading-[14px] tracking-normal text-[#3c3c3c]">{`Checking
The join field Desc_ in the table
DwellingsHI.variable_filter_from_maja_2 is not indexed. To improve
performance, we recommend that an index be created.
The join field label in the table
data_2022_acs_acs5.main.data_2022_acs_acs5_Fields is not indexed.
To improve performance, we recommend that an index be created.
Checking for OIDs...
Checking for join cardinality (1:1 or 1:m joins)...
A one - to - one join has matched 54 records.
The input table has 84 and the join table has 28193 records.`}</pre>
          <div className="mt-[3px] ml-[2px] text-[11.5px] leading-[16px] tracking-[-0.14px] whitespace-nowrap text-[#7d7d7d]">Succeeded at Friday, April 25, 2025 4:04:24 PM (Elapsed Time: 14.88 seconds)</div>
        </div>
        <div className="flex w-[16px] flex-col items-center bg-[#ebebeb] pt-[6px]"><ChevUp className="text-[#555]" /><div className="mt-[52px] h-[80px] w-[9px] rounded-full bg-[#b1b1b1]" /><div className="flex-1" /><Chev className="mb-[5px] text-[#555]" /></div>
      </div>
      <div className="flex justify-end pt-[8px]"><div className="flex h-[24px] w-[80px] items-center justify-center rounded-[3px] border-[1.5px] border-[#0e74c4] pt-px text-[12px] tracking-[-0.2px] text-[#3c3c3c]">Close</div></div>
      <svg className="absolute right-[3px] bottom-[3px] h-[11px] w-[11px]" viewBox="0 0 11 11"><path d="M8 0h2v2H8zM8 4h2v2H8zM4 4h2v2H4zM0 8h2v2H0zM4 8h2v2H4zM8 8h2v2H8z" fill="#c4c4c4" /></svg>
    </div>
  );
}

/* ---------- geoprocessing ---------- */
const Gear = ({ className = '' }: P) => (
  <svg className={`h-[16px] w-[16px] shrink-0 ${className}`} viewBox="0 0 16 16" fill="none"><circle cx="8" cy="8" r="6.500" stroke="#6e6e6e" strokeWidth="2.600" strokeDasharray="2.300 2.804" /><circle cx="8" cy="8" r="4" stroke="#6e6e6e" strokeWidth="2.600" /><circle cx="8" cy="8" r="4" stroke="#cfcfcf" strokeWidth="1" /><circle cx="8" cy="8" r="1.800" fill="#fafafa" stroke="#6e6e6e" /></svg>
);
const OpenFolder = () => (
  <svg className="h-[14px] w-[16px] shrink-0" viewBox="0 0 16 14"><path d="M.5 12V1.500h4l1-1h4l1 1h3V5" fill="#fdfbe9" stroke="#d8c13e" /><path d="M0 13 3 5h13l-2.500 8z" fill="#dac44a" /></svg>
);
function Combo({ v, className }: { v: string; className: string }) {
  return (
    <div className={`flex h-[22px] items-center justify-between border border-[#bdbdc3] bg-white pr-[3px] pl-[4px] text-[#222] ${className}`}>
      <span className="text-[11.500px]">{v}</span><Chev className="text-[#5a5a5a]" />
    </div>
  );
}
function Param({ label, v, w, tail }: { label: string; v: string; w: string; tail?: React.ReactNode }) {
  return (
    <div className="h-[46px]">
      <div className="h-[14px] leading-[13px]">{label}</div>
      <div className="flex items-center"><Combo v={v} className={w} />{tail}</div>
    </div>
  );
}

const WinCtl = () => (
  <div className="flex items-center text-[#4c4c4c]"><Chev /><div className="ml-[11px]"><Pin /></div><Cross className="ml-[10px] h-[10px] w-[10px]" /></div>
);
const Sep = ({ className = '' }: P) => <div className={`w-px shrink-0 bg-[#9a9a9a] ${className}`} />;

export default function App() {
  return (
    <div className="relative flex h-[1386px] w-[2279px] flex-col overflow-hidden bg-[#eeeff2] font-['Open_Sans','Noto_Sans',sans-serif] text-[11.5px] tracking-[-0.25px] whitespace-nowrap text-[#4a4a4a]">
      <div className="h-[5px] shrink-0 border-t-2 border-[#d6d7da]" />
      <div className="flex h-[1372px]">
        {/* docked panel edge */}
        <div className="relative h-[1372px] w-[10px] shrink-0 overflow-hidden rounded-tr-[3px] border-t border-r border-b border-[#cfd0d8] bg-[#f9fafa]">
          <div className="-ml-[5px] pt-[10px]"><Cross className="h-[8px] w-[8px]" /></div>
          <div className="mt-[13px] h-[24px] w-[6px] border border-l-0 border-[#8a8a8a] bg-white" />
          <div className="mt-[77px] h-[1234px] bg-[#e9e9e9]"><ChevUp className="relative -left-[4px] mt-[4px]" /><div className="mt-[984px] h-[225px] w-[5px] rounded-r-full bg-[#b1b1b1]" /><Chev className="relative -left-[4px] mt-[6px]" /></div>
        </div>

        {/* centre column */}
        <div className="ml-[6px] w-[1419px] shrink-0">
          <div className="flex h-[22px] text-[12px] text-[#222]">
            <div className="flex w-[94px] items-center pt-[3px] pl-[5px]">
              <Ico className="-mt-[2px] h-4 w-4"><path d="M5 3V.8h6V3" stroke="#2f86c4" strokeWidth="1.400" /><path d="M.5 3h15v12H.500z" fill="#58a9e0" /><path d="M.5 3h15v3H.5z" fill="#3f93cf" /><path d="M7 15l1-4 2-2 5 6z" fill="#e6efc6" /><path d="M10 9l5 1v5z" fill="#aed6a5" /></Ico>
              <span className="ml-[6px]">Catalog</span>
            </div>
            <div className="flex w-[77px] items-center rounded-t-[4px] bg-[#d3d4d8] pt-[3px] pl-[6px] text-[#5c5c5c]">
              <Ico className="-mt-[2px] h-4 w-4"><path d="M.6.6h14.800v14.800H.6z" fill="#fff" stroke="#6a6a6a" strokeWidth="1.200" /><path d="M2.500 2.500h11v11h-11z" fill="#9cccaa" /><path d="M6 2.500c4 3 0 6 4 11h3.500v-4l-2-2 2-2v-3z" fill="#d2ecf3" /></Ico>
              <span className="ml-[5px] w-[27px]">Map</span><Cross className="-mt-px ml-[6px] h-[10px] w-[10px]" />
            </div>
            <div className="flex flex-1 items-center pt-[3px] pl-[6px]">
              <Ico className="-mt-[2px] h-4 w-4"><path d="M1 12h14l1 3.500H0z" fill="#7fb27f" stroke="#3c7a48" strokeWidth=".8" /><path d="M3.500 14V3l2-2.500L7.500 3v11zM9.500 14V5l1.500-2 2 2v9z" fill="#fff" stroke="#5a5a5a" /></Ico>
              <span className="ml-[5px]">Scene</span><div className="flex-1" /><Chev className="mr-[6px] text-[#4c4c4c]" />
            </div>
          </div>
          <div className="h-[3px] bg-[#d3d4d8]" />
          <div className="ml-px"><MapView /></div>

          <div className="flex h-[25px] w-[1419px] items-start border-r border-b border-l border-[#cfd0d6] bg-[#f8f9f9] text-[#3c3c3c]">
            <div className="mt-px ml-[5px] flex h-[22px] w-[100px] items-center justify-between border border-[#b5b5bb] bg-white pr-[2px] pl-[5px] text-[12px] text-[#222]"><span>1:303,608</span><Chev /></div>
            <Sep className="mt-1 ml-1 h-[16px]" />
            <div className="mt-px ml-[4px] flex h-[20px] w-[20px] items-center justify-center border border-[#3f8fcb] bg-[#a0c8e8]"><Ico><path d="M.5.5h10v10H.5zM5.500.5v10M.5 5.500h10" stroke="#6a86a0" fill="#b8d6ee" /><path d="M12 7v8M8 11h8" stroke="#555" strokeWidth="1.500" /></Ico></div>
            <Ico className="mt-[3px] ml-[3px] h-4 w-4"><path d="M.5 1.500h12v12H.500zM3.500 1.500v12M6.500 1.500v12M9.500 1.500v12M.5 4.500h12M.5 7.500h12M.5 10.500h12" stroke="#9a9a9a" /></Ico>
            <Ico className="mt-[3px] ml-[3px] h-4 w-4"><path d="M.5 1.500h4v3h-4zM11.500 8.500h4v3h-4zM12 1v5M9.500 3.500h5" stroke="#6a6a6a" /><path d="M3 13.500h9M3 12l8-8" stroke="#3f97d3" strokeDasharray="2 1" strokeWidth="1.400" /><path d="M0 12h3v3H0z" fill="#3a9a5a" /></Ico>
            <Ico className="mt-[3px] ml-[4px] h-4 w-4"><path d="M0 0h8v8H0z" fill="#cfe8cf" /><path d="M8 0v16M0 8h16" stroke="#888" strokeDasharray="2 1" /><path d="M6 6h4v4H6z" fill="#777" /></Ico>
            <Ico className="mt-[3px] ml-[4px] h-4 w-4"><path d="M.8 10.500V3.500l4.400 7V3.500" stroke="#2f86c4" strokeWidth="1.800" /><path d="M8 0v16M9 15l6-8" stroke="#777" /><path d="M10 2c3 0 3 1 3 4M11 4l2 2 2-2" stroke="#3f97d3" strokeWidth="1.300" /></Ico>
            <Chev className="mt-[11px] ml-[6px] text-[#333]" />
            <Sep className="mt-1 ml-[8px] h-[16px]" />
            <span className="mt-[4px] ml-[394px] w-[160px] text-[12px] tracking-[-0.45px]">803,299.09E 2,287,876.15N m</span>
            <Chev className="mt-[10px] text-[#333]" />
            <div className="flex-1" />
            <Sep className="mt-1 h-[16px]" />
            <div className="mt-[3px] ml-[7px] opacity-60"><ZoomTo /></div>
            <span className="mt-[3px] ml-[3px] w-[104px] text-[12px] tracking-[-0.35px] text-[#9b9b9b]">Selected Features: 0</span>
            <Sep className="mt-1 ml-[6px] h-[16px]" />
            <Ico className="mt-[5px] ml-[9px] h-[14px] w-[13px]"><path d="M.7 1h14v14h-14zM3 3l5 5 4-5M8 8l-3 6" stroke="#a5a5a5" strokeWidth="1.300" /></Ico>
            <Sep className="mt-1 ml-[8px] h-[16px]" />
            <div className="mt-[5px] ml-[8px] flex h-[14px] w-[12px] justify-between"><div className="w-[4px] bg-[#5f5f5f]" /><div className="w-[4px] bg-[#5f5f5f]" /></div>
            <Sep className="mt-1 ml-[8px] h-[16px]" />
            <div className="mt-[4px] mr-[4px] ml-[6px]"><Refresh /></div>
          </div>

          <div className="mt-[6px] flex">
            {/* left table */}
            <div className="h-[534px] w-[519px] shrink-0">
              <div className="flex h-[22px] text-[12px] text-[#222]">
                <div className="flex w-[126px] items-center overflow-hidden pt-[3px] tracking-[-0.4px]">sus_Block_Groups</div>
                <div className="flex w-[179px] items-center pt-[3px]"><TableIcon /><span className="ml-[5px] tracking-[-0.35px]">variable_filter_from_maja</span></div>
                <div className="flex w-[196px] items-center rounded-t-[4px] bg-[#d3d4d8] pt-[3px] pl-[6px] text-[#5c5c5c]"><TableIcon /><span className="ml-[5px] w-[144px] tracking-[-0.35px]">variable_filter_from_maja_2</span><Cross className="ml-[8px] h-[10px] w-[10px]" /></div>
                <div className="flex flex-1 flex-col items-center justify-center text-[#555]"><div className="mb-[2px] h-px w-[7px] bg-[#555]" /><Chev /></div>
              </div>
              <div className="h-[511px] border-x border-b border-[#cfd0d6] border-t-[3px] border-t-[#d3d4d8] bg-[#f8f9f9]">
                <div className="-mx-px">
                  <div className="mt-px ml-[2px] flex h-[30px] w-[515px] items-center border border-[#c0c2c8] bg-[#eeeff2]">
                    <span className="ml-[5px] w-[38px] text-[12px] font-semibold">Field:</span><FieldAdd /><div className="w-[10px]" /><FieldCalc />
                    <Sep className="ml-[9px] h-[21px] bg-[#c8c8c8]" />
                    <span className="ml-[7px] w-[64px] text-[12px] font-semibold">Selection:</span><SelAttr /><div className="w-[10px]" /><ZoomTo /><div className="w-[10px]" /><SwitchI /><div className="w-[9px]" /><RowsI /><div className="w-[10px]" /><DeleteI /><div className="w-[10px]" /><CopyI />
                    <Sep className="ml-[9px] h-[21px] bg-[#c8c8c8]" />
                    <span className="ml-[7px] w-[41px] text-[12px] font-semibold">Rows:</span><RowsAdd /><Chev className="ml-[4px]" /><div className="flex-1" /><div className="mr-[7px]"><Burger /></div>
                  </div>
                  <div className="mt-px"><LeftGrid /></div>
                  <div className="flex h-[27px] items-center overflow-hidden pt-px text-[12px]">
                    <ViewButtons />
                    <span className="ml-[13px] w-[94px] tracking-[-0.35px]">0 of 84 selected</span><span className="w-[39px]">Filters:</span><FilterTools />
                    <div className="ml-[6px] flex h-[26px] flex-1 items-center overflow-hidden bg-white pl-[4px] tracking-[-0.4px] text-[#222]">100%</div>
                  </div>
                </div>
              </div>
            </div>
            {/* right table */}
            <div className="ml-[6px] h-[534px] w-[894px] shrink-0">
              <div className="flex h-[22px] text-[12px]">
                <div className="flex w-[220px] items-center rounded-t-[4px] bg-[#d3d4d8] pt-[3px] pl-[6px] text-[#5c5c5c]"><TableIcon /><span className="ml-[5px] w-[168px] tracking-[-0.4px]">main.data_2022_acs_acs5_Fields</span><Cross className="ml-[8px] h-[10px] w-[10px]" /></div>
                <div className="flex flex-1 items-center justify-end pt-[3px]"><Chev className="mr-[6px]" /></div>
              </div>
              <div className="h-[511px] border-x border-b border-[#cfd0d6] border-t-[3px] border-t-[#d3d4d8] bg-[#f8f9f9]">
                <div className="-mx-px">
                  <div className="mt-px ml-[2px] flex h-[30px] w-[890px] items-center border border-[#c0c2c8] bg-[#eeeff2] text-[12px]">
                    <span className="ml-[5px] w-[37px] font-semibold">Field:</span><FieldAdd /><span className="ml-[3px] w-[32px]">Add</span><FieldAdd dim /><span className="ml-[3px] w-[59px] text-[#bdbdbd]">Calculate</span>
                    <Sep className="h-[21px] bg-[#c8c8c8]" />
                    <span className="ml-[7px] w-[63px] font-semibold">Selection:</span><SelAttr /><span className="ml-[3px] w-[112px]">Select By Attributes</span><ZoomTo /><span className="ml-[3px] w-[58px] text-[#bdbdbd]">Zoom To</span>
                    <SwitchI /><span className="ml-[3px] w-[44px]">Switch</span><RowsI /><span className="ml-[4px] w-[36px] text-[#bdbdbd]">Clear</span><DeleteI /><span className="ml-[4px] w-[42px] text-[#bdbdbd]">Delete</span><CopyI /><span className="ml-[3px] w-[38px] text-[#bdbdbd]">Copy</span>
                    <Sep className="h-[21px] bg-[#c8c8c8]" />
                    <span className="ml-[8px] w-[40px] font-semibold">Rows:</span><RowsAdd dim /><span className="ml-[4px] w-[34px] pt-[2px] text-[#7d7d7d]">Insert</span><Chev /><div className="flex-1" /><div className="mr-[7px]"><Burger /></div>
                  </div>
                  <div className="mt-px"><RightGrid /></div>
                  <div className="flex h-[27px] items-center pt-px text-[12px]">
                    <ViewButtons />
                    <span className="ml-[13px] w-[106px] tracking-[-0.5px]">0 of *4,000 selected</span>
                    <div className="flex h-[20px] w-[70px] items-center justify-center rounded-[3px] border border-[#4a4a4a] bg-white">Load All</div>
                    <div className="flex-1" />
                    <span className="w-[39px]">Filters:</span><FilterTools />
                    <div className="ml-[6px] flex h-[26px] w-[60px] items-center justify-between bg-white pr-[4px] pl-[4px] text-[#222]">100%<Chev className="text-[#555]" /></div>
                    <Sep className="ml-[5px] h-[14px]" /><div className="mr-[6px] ml-[6px]"><Refresh /></div>
                  </div>
                </div>
              </div>
            </div>
          </div>
        </div>

        {/* catalog */}
        <div className="ml-[6px] flex h-[1372px] w-[499px] shrink-0 flex-col overflow-hidden rounded-t-[3px] border border-[#cfd0d6] bg-[#fafafa]">
          <div className="flex h-[30px] shrink-0 items-center justify-between pt-[2px] pr-[7px] pl-[6px]"><span className="text-[15.500px] tracking-[-0.2px] text-[#222]">Catalog</span><WinCtl /></div>
          <div className="flex h-[27px] shrink-0 items-start pl-[6px] text-[12.500px] leading-[21px] tracking-[-0.3px] text-[#5c5c5c]">
            <span className="h-[22px] w-[42px] border-b-2 border-[#007ac2] font-semibold tracking-[-0.600px] text-[#4a4a4a]">Project</span><span className="ml-[10px] w-[44px]">Portal</span><span className="w-[68px]">Computer</span><span className="flex-1">Favorites</span><div className="mt-[5px] mr-[8px]"><Burger /></div>
          </div>
          <div className="mt-[4px] flex h-[24px] shrink-0 items-center pl-[5px]">
            <svg className="h-[18px] w-[18px]" viewBox="0 0 18 18" fill="none" stroke="#bdbdbd"><circle cx="9" cy="9" r="8.400" /><path d="M14 9H4.500M8.500 5l-4 4 4 4" strokeWidth="1.600" /></svg>
            <div className="ml-[5px] flex h-[24px] w-[23px] items-center justify-center border border-r-0 border-[#c8c8c8]"><Ico className="h-[15px] w-[15px] opacity-50"><path d="M1 8l7-6 7 6M3 7v7h10V7M3 4V2" stroke="#777" strokeWidth="1.500" /><path d="M8.500 9h2.500v5H8.500z" fill="#d9a27c" /><path d="M0 15h16" stroke="#7fb27f" /></Ico></div>
            <div className="flex h-[24px] w-[24px] items-center justify-center border border-[#8a8a8a] bg-white"><Ico><path d="M.5 1h15L10 7.500V15H6.500V7.500z" stroke="#6a6a6a" fill="#f0f0f0" /><path d="M2 3h12" stroke="#6a6a6a" /></Ico></div>
            <div className="flex h-[24px] w-[417px] items-center border border-l-0 border-[#8a8a8a] bg-white pl-[5px] text-[12px] italic"><span className="flex-1 pt-px">Search Project</span><svg className="h-[12px] w-[13px]" viewBox="0 0 13 12" fill="none" stroke="#5a5a5a" strokeWidth="1.500"><circle cx="8" cy="4.800" r="3.900" /><path d="M5 7.500.8 11.500" strokeWidth="2" /></svg><Chev className="mr-[5px] ml-[11px] text-[#5a5a5a]" /></div>
          </div>
          <div className="mt-[4px] flex min-h-0 flex-1">
            <div className="flex w-[475px] flex-col overflow-hidden pt-[2px] pl-[12px] text-[12px]">
              {tree.map((n, i) => <TreeRow key={i} n={n} />)}
              <div className="flex h-6 shrink-0 pl-[36px]"><svg className="h-4 w-4 pt-[2px]" viewBox="0 0 16 16"><path d="M2 2h3v2H2zM6 2h3v2H6z" fill="#c9583a" /></svg></div>
            </div>
            <div className="flex w-[17px] flex-col items-center bg-[#ebebeb] pt-[5px]"><ChevUp className="text-[#555]" /><div className="mt-[8px] h-[1225px] w-[9px] rounded-full bg-[#b1b1b1]" /><div className="flex-1" /><Chev className="mb-[6px] text-[#555]" /></div>
          </div>
        </div>

        {/* geoprocessing */}
        <div className="ml-[6px] flex h-[1372px] w-[331px] shrink-0 flex-col overflow-hidden rounded-t-[3px] border border-[#cfd0d6] bg-[#fafafa] text-[12px] tracking-[-0.2px]">
          <div className="flex h-[30px] shrink-0 items-center justify-between pt-[2px] pr-[6px] pl-[6px]"><span className="text-[15.500px] tracking-[-0.300px] text-[#222]">Geoprocessing</span><WinCtl /></div>
          <div className="flex h-[35px] shrink-0 items-start justify-between pt-[4px] pr-[6px] pl-[6px]">
            <svg className="h-[18px] w-[18px]" viewBox="0 0 18 18" fill="none" stroke="#6a6a6a"><circle cx="9" cy="9" r="8.400" /><path d="M14 9H4.500M8.500 5l-4 4 4 4" strokeWidth="1.600" /></svg>
            <span className="text-[14px] leading-[18px]">Join Field</span>
            <svg className="h-[18px] w-[18px]" viewBox="0 0 18 18" fill="none" stroke="#5a5a5a"><circle cx="9" cy="9" r="8.400" /><path d="M14.500 9h-11M9 3.500v11" strokeWidth="1.700" /></svg>
          </div>
          <div className="flex h-[26px] shrink-0 items-center bg-[#deeefa] pr-[8px] pl-[12px] text-[#1c659c]">
            <svg className="h-[13px] w-[13px]" viewBox="0 0 13 13"><circle cx="6.500" cy="6.500" r="6.300" fill="#4a9edb" /><path d="M6.500 2.500v1.700M5 5.800h1.800v4M5 9.900h3.400" stroke="#fff" strokeWidth="1.400" fill="none" /></svg>
            <span className="ml-[17px] flex-1 pt-[2px] tracking-[-0.25px]">This tool modifies the Input Table</span><Cross className="h-[8px] w-[8px] text-[#777]" />
          </div>
          <div className="flex h-[37px] shrink-0 items-start pt-[3px] pr-[6px] pl-[9px] leading-[20px]">
            <span className="h-[21px] w-[69px] border-b-2 border-[#007ac2] text-[12px] font-semibold tracking-[-0.200px]">Parameters</span><span className="ml-[10px] flex-1 tracking-[-0.1px] text-[#5c5c5c]">Environments</span>
            <svg className="mt-[2px] h-[16px] w-[16px]" viewBox="0 0 16 16" fill="none"><circle cx="8" cy="8" r="7.400" fill="#e2f2fb" stroke="#3f97d3" strokeWidth="1.200" /><path d="M5.500 6c0-3.400 5-3.400 5-.5 0 1.800-2.500 2-2.500 4M8 11v1.800" stroke="#3f97d3" strokeWidth="1.600" /></svg>
          </div>
          <div className="pl-[18px]">
            <Param label="Input Table" v="variable_filter_from_maja_2" w="w-[277px]" tail={<div className="ml-[7px]"><OpenFolder /></div>} />
            <Param label="Input Field" v="Desc" w="w-[279px]" tail={<Gear className="ml-[4px]" />} />
            <Param label="Join Table" v="main.data_2022_acs_acs5_Fields" w="w-[277px]" tail={<div className="ml-[7px]"><OpenFolder /></div>} />
            <Param label="Join Field" v="label" w="w-[279px]" tail={<Gear className="ml-[4px]" />} />
            <Param label="Transfer Method" v="Select transfer fields" w="w-[303px]" />
            <div className="flex h-[19px] items-center"><span className="w-[82px]">Transfer Fields</span><div className="flex h-[18px] w-[18px] items-center justify-center rounded-full border border-[#6a6a6a]"><Chev /></div><Gear className="ml-[6px]" /></div>
            <div className="mt-[1px] flex flex-col gap-[2px]">
              {['index', 'concept', 'group', 'attributes', ''].map((v, i) => (
                <div key={i} className="flex items-center">
                  <div className={i === 3 ? 'h-[22px] w-[5px] bg-[#dedede]' : 'w-[5px]'} />
                  <div className="flex w-[20px] justify-center pl-px text-[#c9583a]">{i === 3 && <svg className="h-[7px] w-[7px]" viewBox="0 0 7 7" stroke="currentColor" strokeWidth="1.600"><path d="M.5.5l6 6M6.500.5l-6 6" /></svg>}</div>
                  <Combo v={v} className="w-[278px]" />
                </div>
              ))}
            </div>
            <div className="mt-[10px]"><Param label="Index Join Fields" v="Do not add indexes" w="w-[303px]" /></div>
            <div className="mt-[14px] -ml-[6px] flex h-[24px] w-[79px] items-center justify-center rounded-[3px] border border-[#4a4a4a] bg-white">Validate Join</div>
          </div>
          <div className="flex-1" />
          <div className="mr-[6px] mb-[5px] flex h-[25px] w-[86px] items-center self-end rounded-[3px] border border-[#8a8a8a] bg-white pr-[4px] pl-[11px]">
            <svg className="h-[13px] w-[12px]" viewBox="0 0 12 13"><path d="M1 .8v11.400L11 6.500z" fill="#6cc24a" stroke="#3c8a32" /></svg><span className="ml-[11px] flex-1">Run</span><div className="mr-[4px] h-[23px] w-px bg-[#c0c0c0]" /><Chev />
          </div>
        </div>
      </div>
      <div className="mt-[6px] h-[2px] bg-[#c2c3c7]" />
      <Dialog />
    </div>
  );
}
